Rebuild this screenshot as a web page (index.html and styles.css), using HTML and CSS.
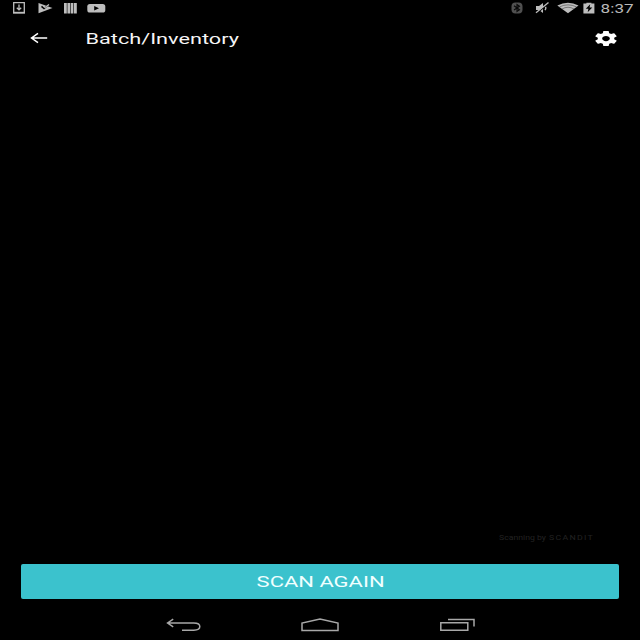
FILE: index.html
```html
<!DOCTYPE html>
<html lang="en">
<head>
<meta charset="utf-8">
<title>Batch/Inventory</title>
<link rel="stylesheet" href="styles.css">
</head>
<body>
<div class="screen">
  <header class="status">
    <div class="notifications">
      <svg width="12" height="12" viewBox="0 0 12 12"><path class="line" d="M.7.6h10.6v10H.7z"/><path class="line heavy" d="M0 10.7h12"/><path class="line" d="M6 2.5v5M3.8 5.7 6 7.9l2.2-2.2"/></svg>
      <svg width="15" height="12" viewBox="0 0 15 12"><path class="fill" d="M.5 1 14.5 6 .5 11.2z"/><path class="cut" d="M3.5 4.4 6 6.6 12 1.2"/><path class="line" d="m5.5 4 1.5 1.4L11 2.4"/></svg>
      <svg width="13" height="12" viewBox="0 0 13 12"><path class="fill" d="M0 1h2.8v10.4H0zM3.4 1h2.7v10.4H3.4zM6.7 1h2.7v10.4H6.7zM10 1h2.8v10.4H10z"/></svg>
      <svg width="19" height="12" viewBox="0 0 19 12"><rect class="fill" x=".3" y="2" width="18" height="8.6" rx="2.6"/><path d="M7.2 4 12 6.3 7.2 8.6z"/></svg>
    </div>
    <div class="system">
      <svg class="bluetooth" width="12" height="12" viewBox="0 0 12 12"><rect x=".5" y=".5" width="11" height="11" rx="4"/><path d="m3 3.7 5.5 4L6 9.5v-7l2.5 1.8L3 8"/></svg>
      <svg class="muted" width="15" height="12" viewBox="0 0 15 12"><path class="fill" d="M1 4h3l4-3v10L4 8H1z"/><path class="line" d="M10 4.2q1.7 1.7 0 4"/><path class="cut" d="M1.5 11.5 14 1"/><path class="line" d="M1 10.8 13.5.5"/></svg>
      <svg class="wifi" width="22" height="12" viewBox="0 0 22 12"><path class="fill" d="M.3 3.4Q11-2 21.5 3.4L11 11.3z"/><path class="ring" d="M2.5 4.9Q11 .8 19.5 4.9M5 7Q11 3.5 17 7"/></svg>
      <svg class="battery" width="12" height="12" viewBox="0 0 12 12"><path class="fill" d="M.4 1.6h3V.8h5v.8h3v9.8H.4z"/><path d="M7.2 2.2 2.8 6.8h2.6l-.7 3.4 4.6-4.7H6.6z"/></svg>
      <svg class="clock" width="33" height="14"><text x="-0.4" y="10.8" textLength="33" lengthAdjust="spacingAndGlyphs">8:37</text></svg>
    </div>
  </header>
  <nav class="toolbar">
    <svg class="back" width="18" height="12" viewBox="0 0 18 12"><path d="M17.2 6H1.5M8 1.3 1.5 6 8 10.7"/></svg>
    <svg class="title" width="156" height="20"><text x="-0.5" y="16" textLength="153.5" lengthAdjust="spacingAndGlyphs">Batch/Inventory</text></svg>
    <svg class="gear" width="22" height="15" viewBox="2 2 20 20" preserveAspectRatio="none"><path fill-rule="evenodd" d="M19.43 12.98c.04-.32.07-.64.07-.98s-.03-.66-.07-.98l2.11-1.65c.19-.15.24-.42.12-.64l-2-3.46c-.12-.22-.39-.3-.61-.22l-2.49 1c-.52-.4-1.08-.73-1.69-.98l-.38-2.65C14.46 2.18 14.25 2 14 2h-4c-.25 0-.46.18-.49.42l-.38 2.65c-.61.25-1.17.59-1.69.98l-2.49-1c-.23-.09-.49 0-.61.22l-2 3.46c-.13.22-.07.49.12.64l2.11 1.65c-.04.32-.07.65-.07.98s.03.66.07.98l-2.11 1.65c-.19.15-.24.42-.12.64l2 3.46c.12.22.39.3.61.22l2.49-1c.52.4 1.08.73 1.69.98l.38 2.65c.03.24.24.42.49.42h4c.25 0 .46-.18.49-.42l.38-2.65c.61-.25 1.17-.59 1.69-.98l2.49 1c.23.09.49 0 .61-.22l2-3.46c.12-.22.07-.49-.12-.64zM12 15.5c-1.93 0-3.5-1.57-3.5-3.5s1.57-3.5 3.5-3.5 3.5 1.57 3.5 3.5-1.57 3.5-3.5 3.5z"/></svg>
  </nav>
  <main class="viewfinder">
    <svg class="credit" width="96" height="10"><text x="0" y="7.3" textLength="47" lengthAdjust="spacingAndGlyphs">Scanning by</text><text class="brand" x="50" y="7.3" textLength="45" lengthAdjust="spacingAndGlyphs">SCANDIT</text></svg>
  </main>
  <button class="scan"><svg width="128" height="20"><text x="0.6" y="15.4" textLength="128" lengthAdjust="spacingAndGlyphs">SCAN AGAIN</text></svg></button>
  <footer class="navigation">
    <svg width="36" height="14" viewBox="0 0 36 14"><path d="M7.2 1.2 1.6 5 7.2 8.8M1.6 5h26.2c8 0 8 7.2 0 7.2H16"/></svg>
    <svg width="38" height="14" viewBox="0 0 38 14"><path d="M1 12.4V5L19 .9 37 5v7.4z"/></svg>
    <svg width="36" height="14" viewBox="0 0 36 14"><path d="M1.8 4.8h27v7.4h-27zM9 1.4h26v7.2"/></svg>
  </footer>
</div>
</body>
</html>
```
FILE: styles.css
```css
body {
  margin: 0;
  background: #000;
  font-family: Roboto, "Liberation Sans", sans-serif;
}
svg { display: block; flex: none; overflow: visible; }
.screen {
  width: 640px;
  height: 640px;
  overflow: hidden;
  display: flex;
  flex-direction: column;
  background: #000;
}
.status {
  height: 18px;
  display: flex;
  justify-content: space-between;
  padding: 2px 6.5px 0 13px;
  box-sizing: border-box;
}
.notifications, .system { display: flex; align-items: flex-start; }
.notifications { gap: 12.5px; }
.notifications svg:nth-child(3) { margin-left: -1px; }
.notifications svg:nth-child(4) { margin-left: -3px; }
.fill { fill: #bdbdbd; }
.line { fill: none; stroke: #bdbdbd; stroke-width: 1.3; }
.heavy { stroke-width: 1.8; }
.cut { fill: none; stroke: #000; stroke-width: 1.5; }
.bluetooth rect { fill: #505050; }
.bluetooth path { fill: none; stroke: #080808; stroke-width: 1.1; }
.muted { margin-left: 12px; }
.wifi { margin-left: 7px; }
.ring { fill: none; stroke: #444; stroke-width: .6; }
.battery { margin-left: 4px; }
.clock { margin-left: 5.5px; }
.clock text { fill: #b8b8b8; font-size: 12px; }
.toolbar {
  height: 40px;
  display: flex;
  align-items: center;
  padding: 0 23px 0 29.5px;
}
.back { fill: none; stroke: #fff; stroke-width: 1.5; }
.title { margin-left: 38px; }
.title text { fill: #f5f5f5; font-size: 14px; }
.gear { margin-left: auto; fill: #fff; }
.viewfinder {
  flex: 1;
  display: flex;
  justify-content: flex-end;
  align-items: flex-end;
  padding: 0 45px 21px 0;
}
.credit text { fill: #222; font-size: 7px; }
.credit .brand { letter-spacing: 1px; }
.scan {
  height: 35px;
  margin: 0 21px;
  margin-right: 21.5px;
  padding: 0;
  border: 0;
  border-radius: 2px;
  background: #3bc2cd;
  display: flex;
  align-items: center;
  justify-content: center;
  font-family: inherit;
}
.scan text { fill: #f0ffff; font-size: 14px; }
.navigation {
  height: 22px;
  padding: 19px 165px 0 165.5px;
  display: flex;
  justify-content: space-between;
}
.navigation path { fill: none; stroke: #a8a8a8; stroke-width: 1.5; }
```
